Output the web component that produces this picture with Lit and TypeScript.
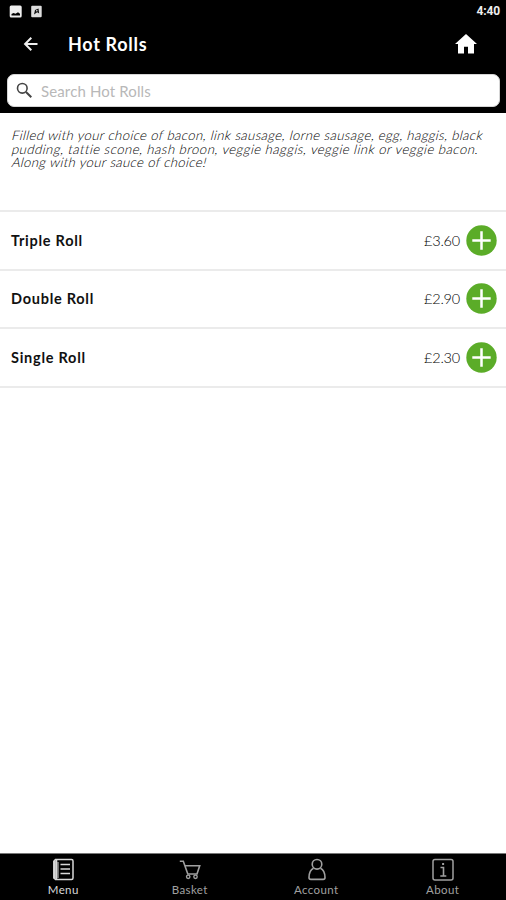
import { LitElement, html, css, svg } from "lit";
import { customElement } from "lit/decorators.js";

const items = [
  { name: "Triple Roll", price: "£3.60" },
  { name: "Double Roll", price: "£2.90" },
  { name: "Single Roll", price: "£2.30" },
];

const tabs = [
  {
    label: "Menu",
    cls: "menu",
    icon: svg`<path d="M3.500 1.500h16a1.500 1.500 0 0 1 1.500 1.500v17a1.500 1.500 0 0 1-1.500 1.500h-16L2 20V3z" stroke-width="1.500"/><path d="M2.200 3v17.500M4.300 2v19" stroke-width="2"/><path d="M6 4v16" stroke-width="1"/><path d="M8.500 6.500h9.500M8.500 11h9.500M8.500 15.500h9.500" stroke-width="1.500"/>`,
  },
  {
    label: "Basket",
    cls: "basket",
    icon: svg`<path d="M1.800 3.300h3.500l4.500 12.700h9.200l2.700-8.200H6.700" stroke-width="1.600"/><circle cx="10.200" cy="18.800" r="1.700" stroke-width="1.400"/><circle cx="17.500" cy="18.800" r="1.700" stroke-width="1.400"/>`,
  },
  {
    label: "Account",
    cls: "account",
    icon: svg`<circle cx="12" cy="6.300" r="4.800" stroke-width="1.600"/><path d="M8.500 10.200C5.700 11.500 4.100 14.500 4 19.500c0 1.300.7 1.900 1.800 1.900h12.400c1.100 0 1.800-.6 1.800-1.900-.1-5-1.700-8-4.500-9.300" stroke-width="1.600"/>`,
  },
  {
    label: "About",
    cls: "about",
    icon: svg`<rect x="2" y="1.500" width="20" height="20.500" rx="2" stroke-width="1.500"/><path d="M9.500 9.500h3v8.300M9.300 18h6" stroke-width="1.600"/><path d="M12.100 5v2" stroke-width="2"/>`,
  },
];

@customElement("app-root")
export class AppRoot extends LitElement {
  static styles = css`
    :host {
      display: flex;
      flex-direction: column;
      height: 900px;
      background: #fff;
      font-family: Lato, "Liberation Sans", sans-serif;
      color: #111;
      white-space: nowrap;
    }
    svg { display: block; flex: none; overflow: visible; }
    .top { background: #000; height: 113px; flex: none; box-sizing: border-box; color: #fff; }
    .status { height: 22px; display: flex; align-items: center; padding: 0 6px 0 9px; gap: 8px; }
    .clock {
      margin-left: auto;
      font: 700 12px/22px Roboto, sans-serif;
      letter-spacing: -0.15px;
      color: #eee;
    }
    .bar { height: 44px; display: flex; align-items: center; padding: 0 27px 0 22px; }
    .title { margin: 0 0 0 28px; font-size: 18px; font-weight: 700; letter-spacing: 0.7px; line-height: 24px; flex: 1; }
    .search {
      margin: 8px 6px 0 7px;
      height: 33px;
      box-sizing: border-box;
      border-radius: 7px;
      border: 1px solid #d5d5d5;
      background: #fff;
      display: flex;
      align-items: center;
      padding-left: 8px;
    }
    .placeholder { margin-left: 8px; font-size: 15px; letter-spacing: 0.13px; color: #b8b8b8; }
    .desc {
      height: 97px;
      box-sizing: border-box;
      padding: 16px 0 0 12px;
      font-size: 13.2px;
      font-weight: 300;
      line-height: 13.5px;
      color: #000;
    }
    .desc p { margin: 0; height: 13.5px; }
    .desc span { display: inline-block; transform: skewX(-14deg); line-height: 13px; height: 13px; }
    .l1 { letter-spacing: 0.35px; }
    .l2 { letter-spacing: 0.44px; }
    .l3 { letter-spacing: 0.33px; }
    .list { border-top: 2.5px solid #ebebeb; }
    .row {
      height: 58.5px;
      box-sizing: border-box;
      border-bottom: 2px solid #ebebeb;
      display: flex;
      align-items: center;
      padding: 0 9px 0 11px;
    }
    .name { flex: 1; font-size: 14.5px; font-weight: 700; letter-spacing: 0.74px; }
    .price { font-size: 14.5px; font-weight: 300; color: #000; margin-right: 6px; letter-spacing: -0.2px; }
    .tabs { margin-top: auto; height: 47px; background: #000; display: flex; border-top: 1px solid #777; box-sizing: border-box; }
    .tab { flex: 1; display: flex; flex-direction: column; align-items: center; padding-top: 4px; color: #a0a0a0; font-size: 11.5px; line-height: 14px; }
    .tab svg { margin-bottom: 2px; }
    .tab.menu { color: #d8d8d8; }
    .label { letter-spacing: 0.4px; }
  `;

  render() {
    return html`
      <header class="top">
        <div class="status">
          <svg width="13" height="13" viewBox="0 0 13 13"><rect x="0.700" y="0.500" width="12" height="12" rx="1.500" fill="#eee"/><path d="M2.500 10.500V9l2-1 2 .7L9 7.200l2 1.500v1.800z" fill="#000"/></svg>
          <svg width="13" height="13" viewBox="0 0 13 13"><rect x="1.200" y="0.800" width="10.500" height="11.400" rx="1" fill="#ddd"/><path d="M4 9.500l1-4.500 3.500-1.500.7 5-2-1.200z" fill="#111"/><circle cx="6.800" cy="5.800" r=".8" fill="#ddd"/></svg>
          <span class="clock">4:40</span>
        </div>
        <div class="bar">
          <svg width="18" height="18" viewBox="0 0 18 18" fill="none" stroke="#eee" stroke-width="2"><path d="M15.500 9H3.500M9.300 2.800L3.100 9l6.200 6.200"/></svg>
          <span class="title">Hot Rolls</span>
          <svg width="26" height="24" viewBox="0 0 26 24"><path d="M13 2L2 12h3v9.500h6v-6.800h4v6.800h6V12h3z" fill="#fff"/></svg>
        </div>
        <div class="search">
          <svg width="17" height="17" viewBox="0 0 17 17" fill="none" stroke="#444"><circle cx="6.300" cy="6.300" r="4.800" stroke-width="1.600"/><path d="M10 10l5.300 5.300" stroke-width="2"/></svg>
          <span class="placeholder">Search Hot Rolls</span>
        </div>
      </header>
      <section class="desc">
        <p><span class="l1">Filled with your choice of bacon, link sausage, lorne sausage, egg, haggis, black</span></p>
        <p><span class="l2">pudding, tattie scone, hash broon, veggie haggis, veggie link or veggie bacon.</span></p>
        <p><span class="l3">Along with your sauce of choice!</span></p>
      </section>
      <main class="list">
        ${items.map(
          (i) => html`<div class="row">
            <span class="name">${i.name}</span>
            <span class="price">${i.price}</span>
            <svg width="31" height="31" viewBox="0 0 31 31"><circle cx="15.500" cy="15.500" r="15.200" fill="#5bac28"/><path d="M6.300 15.500h18.400M15.500 6.300v18.400" stroke="#fff" stroke-width="2.500"/></svg>
          </div>`
        )}
      </main>
      <nav class="tabs">
        ${tabs.map(
          (t) => html`<div class="tab ${t.cls}">
            <svg width="23" height="23" viewBox="0 0 23 23" fill="none" stroke="currentColor">${t.icon}</svg>
            <span class="label">${t.label}</span>
          </div>`
        )}
      </nav>
    `;
  }
}
